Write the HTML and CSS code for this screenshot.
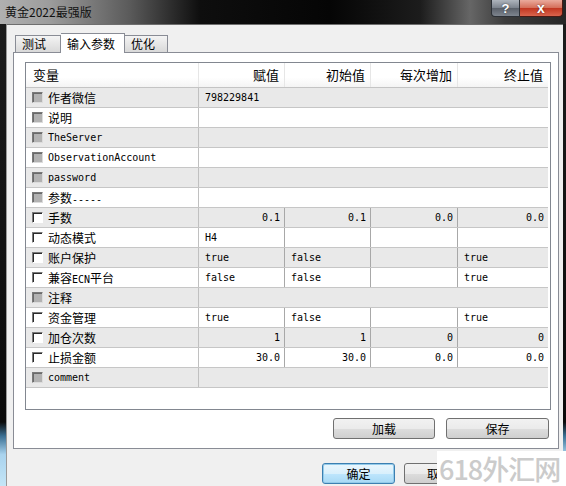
FILE: index.html
```
<!DOCTYPE html>
<html lang="zh-CN">
<head>
    <meta charset="UTF-8">
    <title>黄金2022最强版</title>
    <link rel="stylesheet" href="styles.css">
</head>
<body>
    <div class="window">
        <div class="titlebar">
            <span class="title">黄金2022最强版</span>
            <div class="caption">
                <span class="cap-btn cap-help">?</span>
                <span class="cap-btn cap-close">x</span>
            </div>
        </div>

        <div class="frame">
            <div class="client">
                <div class="tabs">
                    <span class="tab tab-first">测试</span>
                    <span class="tab active">输入参数</span>
                    <span class="tab">优化</span>
                </div>

                <div class="panel">
                    <div class="params">
                        <div class="head">
                            <span class="hcell name-h">变量</span>
                            <span class="hcell">赋值</span>
                            <span class="hcell">初始值</span>
                            <span class="hcell">每次增加</span>
                            <span class="hcell">终止值</span>
                        </div>

                        <div class="row odd">
                            <span class="name"><i class="check off"></i><span>作者微信</span></span>
                            <span class="val wide">798229841</span>
                        </div>
                        <div class="row">
                            <span class="name"><i class="check off"></i><span>说明</span></span>
                            <span class="val wide"></span>
                        </div>
                        <div class="row odd">
                            <span class="name"><i class="check off"></i><span class="latin">TheServer</span></span>
                            <span class="val wide"></span>
                        </div>
                        <div class="row">
                            <span class="name"><i class="check off"></i><span class="latin">ObservationAccount</span></span>
                            <span class="val wide"></span>
                        </div>
                        <div class="row odd">
                            <span class="name"><i class="check off"></i><span class="latin">password</span></span>
                            <span class="val wide"></span>
                        </div>
                        <div class="row">
                            <span class="name"><i class="check off"></i><span>参数<b class="latin">-----</b></span></span>
                            <span class="val wide"></span>
                        </div>
                        <div class="row odd">
                            <span class="name"><i class="check"></i><span>手数</span></span>
                            <span class="val num">0.1</span>
                            <span class="val num">0.1</span>
                            <span class="val num">0.0</span>
                            <span class="val num last">0.0</span>
                        </div>
                        <div class="row">
                            <span class="name"><i class="check"></i><span>动态模式</span></span>
                            <span class="val">H4</span>
                            <span class="val"></span>
                            <span class="val"></span>
                            <span class="val last"></span>
                        </div>
                        <div class="row odd">
                            <span class="name"><i class="check"></i><span>账户保护</span></span>
                            <span class="val">true</span>
                            <span class="val">false</span>
                            <span class="val"></span>
                            <span class="val last">true</span>
                        </div>
                        <div class="row">
                            <span class="name"><i class="check"></i><span>兼容<b class="latin">ECN</b>平台</span></span>
                            <span class="val">false</span>
                            <span class="val">false</span>
                            <span class="val"></span>
                            <span class="val last">true</span>
                        </div>
                        <div class="row odd">
                            <span class="name"><i class="check off"></i><span>注释</span></span>
                            <span class="val wide"></span>
                        </div>
                        <div class="row">
                            <span class="name"><i class="check"></i><span>资金管理</span></span>
                            <span class="val">true</span>
                            <span class="val">false</span>
                            <span class="val"></span>
                            <span class="val last">true</span>
                        </div>
                        <div class="row odd">
                            <span class="name"><i class="check"></i><span>加仓次数</span></span>
                            <span class="val num">1</span>
                            <span class="val num">1</span>
                            <span class="val num">0</span>
                            <span class="val num last">0</span>
                        </div>
                        <div class="row">
                            <span class="name"><i class="check"></i><span>止损金额</span></span>
                            <span class="val num">30.0</span>
                            <span class="val num">30.0</span>
                            <span class="val num">0.0</span>
                            <span class="val num last">0.0</span>
                        </div>
                        <div class="row odd">
                            <span class="name"><i class="check off"></i><span class="latin">comment</span></span>
                            <span class="val wide"></span>
                        </div>
                    </div>

                    <div class="panel-actions">
                        <button class="btn btn-wide">加载</button>
                        <button class="btn btn-wide">保存</button>
                    </div>
                </div>

                <div class="dialog-actions">
                    <button class="btn btn-default">确定</button>
                    <button class="btn btn-cancel">取消</button>
                </div>
            </div>
        </div>
    </div>

    <div class="watermark">618外汇网</div>
</body>
</html>
```

FILE: styles.css
```
body {
    margin: 0;
    width: 566px;
    height: 486px;
    overflow: hidden;
    position: relative;
    background-color: #f0f0f0;
    font-family: "Noto Sans CJK SC", sans-serif;
    font-size: 12px;
    color: #000;
}

.window {
    height: 486px;
    display: flex;
    flex-direction: column;
}

/* caption bar */
.titlebar {
    height: 24px;
    flex: none;
    display: flex;
    background: linear-gradient(90deg, #b0b0b0 0, #9c9c9c 50px, #5a5a5a 130px, #0e0e0e 200px, #050505 330px, #1c1c1c 420px, #666 470px, #3c3c3c 505px, #262626 566px);
}

.title {
    padding: 4px 0 0 5px;
    line-height: 16px;
    color: #111;
}

.caption {
    margin-left: auto;
    margin-right: 3px;
    display: flex;
    align-self: flex-start;
}

.cap-btn {
    height: 17px;
    box-sizing: border-box;
    display: flex;
    justify-content: center;
    align-items: center;
    color: #fff;
    font-family: "Liberation Sans", sans-serif;
    font-weight: bold;
    font-size: 13px;
    text-shadow: 0 0 2px rgba(0, 0, 0, 0.6);
}

.cap-help {
    width: 29px;
    border: 1px solid #2c3036;
    border-top: none;
    border-radius: 0 0 0 4px;
    background: linear-gradient(#aeb4bc, #7b828c 50%, #5a6069 51%, #7d848e);
}

.cap-close {
    width: 43px;
    border: 1px solid #4a1a14;
    border-top: none;
    border-left: none;
    border-radius: 0 0 4px 0;
    background: linear-gradient(#eaaa9c, #d46d58 50%, #c13620 51%, #d9644d);
    font-size: 14px;
}

/* window edges */
.frame {
    flex: 1;
    display: flex;
    border-style: solid;
    border-width: 0 3px 0 6px;
    border-image: linear-gradient(#1c1c1c, #0a0a0a 86%, #3a6f93 89%, #a9d3ee 93%, #c5e6f7) 1;
}

.client {
    flex: 1;
    border-top: 1px solid #6e6e6e;
    border-left: 1px solid #9a9a9a;
    padding: 0 4px 0 6px;
}

/* tabs */
.tabs {
    display: flex;
    align-items: flex-end;
    height: 19px;
    margin-top: 8px;
    padding-left: 2px;
}

.tab {
    height: 17px;
    box-sizing: border-box;
    padding: 0 6px;
    border: 1px solid #898c95;
    border-bottom: none;
    border-left: none;
    background: linear-gradient(#f4f4f4, #e6e6e6 50%, #d9d9d9);
    line-height: 16px;
}

.tab-first {
    width: 46px;
    border-left: 1px solid #898c95;
}

.tab.active {
    width: 64px;
    height: 20px;
    margin-bottom: -1px;
    position: relative;
    background: #fff;
    line-height: 19px;
}

.tab:last-child {
    width: 43px;
}

.panel {
    border: 1px solid #898c95;
    background: #fff;
    padding: 9px 6px 9px 11px;
}

/* parameter grid */
.params {
    width: 526px;
    height: 348px;
    box-sizing: border-box;
    border: 1px solid #828790;
    padding-right: 2px;
}

.head,
.row {
    display: grid;
    grid-template-columns: 173px 86px 86px 87px 90px;
}

.head {
    height: 25px;
    box-sizing: border-box;
    border-bottom: 1px solid #c4c4c4;
    background: linear-gradient(#fff, #fff 60%, #f4f4f4);
}

.hcell {
    border-right: 1px solid #e6e6e6;
    text-align: right;
    padding-right: 5px;
    line-height: 23px;
    font-size: 13px;
}

.hcell:last-child {
    border-right: none;
}

.hcell.name-h {
    text-align: left;
    padding-left: 7px;
}

.row {
    height: 20px;
    box-sizing: border-box;
    border-bottom: 1px solid #c6c6c6;
}

.row.odd {
    background: #e9e9e9;
}

.name {
    display: flex;
    align-items: center;
    gap: 5px;
    padding-left: 6px;
    border-right: 1px solid #c0c0c0;
    white-space: nowrap;
}

.latin {
    font-weight: normal;
    font-family: "DejaVu Sans Mono", monospace;
    font-size: 10px;
}

.check {
    width: 11px;
    height: 11px;
    box-sizing: border-box;
    flex: none;
    border-top: 1px solid #7a7a7a;
    border-left: 1px solid #7a7a7a;
    border-right: 1px solid #fff;
    border-bottom: 1px solid #fff;
    box-shadow: inset 1px 1px 0 #2a2a2a;
    background: #fff;
}

.check.off {
    background: #b2b2b2;
    border-right-color: #dcdcdc;
    border-bottom-color: #dcdcdc;
    box-shadow: inset 1px 1px 0 #6a6a6a;
}

.val {
    padding: 0 4px 0 6px;
    border-right: 1px solid #a8a8a8;
    font-family: "DejaVu Sans Mono", monospace;
    font-size: 10px;
    line-height: 19px;
    white-space: nowrap;
}

.val.last,
.val.wide {
    border-right: none;
}

.val.wide {
    grid-column: span 4;
}

.val.num {
    text-align: right;
}

/* buttons */
.btn {
    height: 21px;
    width: 73px;
    padding: 0;
    box-sizing: border-box;
    border: 1px solid #707070;
    border-radius: 3px;
    background: linear-gradient(#f2f2f2, #ebebeb 50%, #dddddd 51%, #cfcfcf);
    font-family: "Noto Sans CJK SC", sans-serif;
    font-size: 12px;
    line-height: 18px;
    color: #000;
}

.btn-wide:first-child {
    width: 102px;
}

.btn-wide {
    width: 103px;
}

.btn-default {
    border-color: #3c7fb1;
    background: linear-gradient(#eaf6fd, #d9f0fc 50%, #bee6fd 51%, #a7d9f5);
    box-shadow: inset 0 0 0 1px #94cbea;
}

/* cancel sits half under the stamp, only its first glyph shows */
.btn-cancel {
    text-align: left;
    padding-left: 22px;
    overflow: hidden;
}

.panel-actions {
    display: flex;
    justify-content: flex-end;
    gap: 11px;
    margin-top: 8px;
    padding-right: 3px;
}

.dialog-actions {
    display: flex;
    justify-content: flex-end;
    gap: 9px;
    margin-top: 14px;
    padding-right: 82px;
}

/* site stamp over the lower corner */
.watermark {
    position: absolute;
    right: 0;
    bottom: 0;
    width: 129px;
    height: 35px;
    background: #fff;
    color: #cbcbcb;
    font-size: 27px;
    font-weight: 500;
    letter-spacing: -1px;
    line-height: 35px;
    white-space: nowrap;
    overflow: hidden;
    padding-left: 2px;
    box-sizing: border-box;
}
```
